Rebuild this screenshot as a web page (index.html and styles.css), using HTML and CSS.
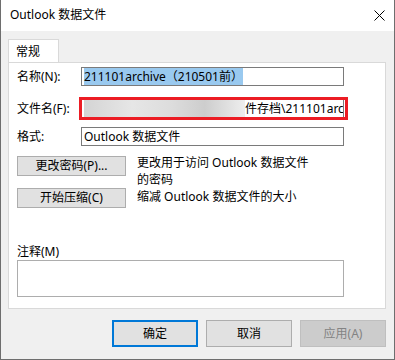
FILE: index.html
```html
<!DOCTYPE html>
<html>
<head>
	<meta charset="utf-8">
	<title>Outlook 数据文件</title>
	<link rel="stylesheet" href="styles.css">
</head>
<body>
	<div class="window">
		<div class="titlebar">
			<span class="title">Outlook 数据文件</span>
			<svg class="close" width="11" height="11" viewBox="0 0 11 11">
				<path d="M0.5 0.5 L10.5 10.5 M10.5 0.5 L0.5 10.5" stroke="#000" stroke-width="1" fill="none"/>
			</svg>
		</div>
		<div class="content">
			<div class="tabs">
				<div class="tab">常规</div>
			</div>
			<div class="panel">
				<div class="field-row first">
					<span class="label">名称(N):</span>
					<div class="input"><span class="selected">211101archive（210501前）</span></div>
				</div>
				<div class="field-row second">
					<span class="label">文件名(F):</span>
					<div class="input path">
						<div class="blurred"></div>
						<span class="path-text">件存档\211101archive</span>
					</div>
					<div class="highlight-box"></div>
				</div>
				<div class="field-row third">
					<span class="label">格式:</span>
					<div class="input">Outlook 数据文件</div>
				</div>
				<div class="action-row first-action">
					<div class="button small">更改密码(P)...</div>
					<div class="desc">更改用于访问 Outlook 数据文件<br>的密码</div>
				</div>
				<div class="action-row">
					<div class="button small">开始压缩(C)</div>
					<div class="desc">缩减 Outlook 数据文件的大小</div>
				</div>
				<div class="notes-label">注释(M)</div>
				<div class="notes"></div>
			</div>
			<div class="footer">
				<div class="button big default">确定</div>
				<div class="button big">取消</div>
				<div class="button big disabled">应用(A)</div>
			</div>
		</div>
	</div>
</body>
</html>
```

FILE: styles.css
```css
		html, body {
			margin: 0;
			padding: 0;
		}
		body {
			font-family: "Noto Sans", "Noto Sans CJK SC", sans-serif;
			font-size: 12px;
			color: #000;
			background: #fff;
		}
		.window {
			width: 395px;
			height: 360px;
			box-sizing: border-box;
			border: 1px solid #6e6e6e;
			border-top: none;
			background-color: #f0f0f0;
			display: flex;
			flex-direction: column;
		}
		.titlebar {
			height: 31px;
			background-color: #fff;
			display: flex;
			align-items: center;
			justify-content: space-between;
			padding: 0 9px 0 9px;
		}
		.title {
			line-height: 16px;
			margin-top: -1px;
		}
		.close {
			display: block;
			margin-top: -1px;
		}
		.content {
			padding: 8px 8px 0 7px;
			display: flex;
			flex-direction: column;
		}
		.tabs {
			display: flex;
		}
		.tab {
			position: relative;
			width: 51px;
			height: 24px;
			box-sizing: border-box;
			border: 1px solid #d9d9d9;
			border-bottom: none;
			background-color: #fff;
			margin-bottom: -1px;
			padding: 4px 0 0 7px;
			line-height: 16px;
		}
		.panel {
			position: relative;
			height: 247px;
			box-sizing: border-box;
			border: 1px solid #d9d9d9;
			background-color: #fff;
			padding: 0 0 0 8px;
		}
		.field-row {
			position: relative;
			display: flex;
			align-items: center;
			height: 19px;
		}
		.field-row.first {
			margin-top: 4px;
		}
		.field-row.second {
			margin-top: 13px;
		}
		.field-row.third {
			margin-top: 9px;
		}
		.label {
			width: 64px;
			line-height: 16px;
		}
		.input {
			width: 263px;
			height: 19px;
			box-sizing: border-box;
			border: 1px solid #7a7a7a;
			padding: 0 2px;
			line-height: 17px;
			white-space: nowrap;
			overflow: hidden;
		}
		.selected {
			background-color: #99c9ef;
		}
		.input.path {
			display: flex;
		}
		.blurred {
			flex: 0 0 161px;
			height: 100%;
			background: linear-gradient(to right, #d4d4d4, #e6e6e6 30%, #dcdcdc 55%, #cdcdcd 75%, #eeeeee);
		}
		.path-text {
			flex: none;
		}
		.highlight-box {
			position: absolute;
			left: 62px;
			top: -2px;
			width: 269px;
			height: 23px;
			box-sizing: border-box;
			border: 3px solid #ec1c24;
		}
		.action-row {
			display: flex;
			align-items: flex-start;
		}
		.action-row.first-action {
			margin-top: 10px;
		}
		.button {
			box-sizing: border-box;
			border: 1px solid #adadad;
			background-color: #e1e1e1;
			display: flex;
			align-items: center;
			justify-content: center;
		}
		.button.small {
			width: 109px;
			height: 20px;
			line-height: 16px;
		}
		.desc {
			margin-left: 11px;
			line-height: 17px;
		}
		.first-action .desc {
			margin-top: -2px;
		}
		.notes-label {
			margin-top: 36px;
			line-height: 16px;
		}
		.notes {
			width: 327px;
			height: 37px;
			box-sizing: border-box;
			border: 1px solid #adadad;
		}
		.footer {
			display: flex;
			justify-content: flex-end;
			gap: 8px;
			margin-top: 11px;
		}
		.button.big {
			width: 86px;
			height: 27px;
			line-height: 16px;
		}
		.button.default {
			border: 2px solid #0078d7;
		}
		.button.disabled {
			background-color: #cccccc;
			border-color: #bfbfbf;
			color: #838383;
		}
```
